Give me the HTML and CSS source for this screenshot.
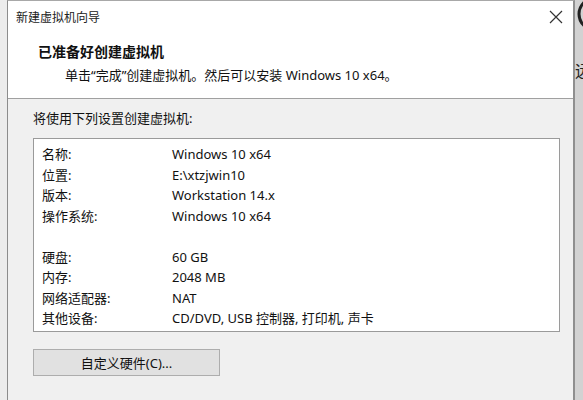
FILE: index.html
```html
<!DOCTYPE html>
<html lang="zh-CN">
<head>
  <meta charset="UTF-8" />
  <title>新建虚拟机向导</title>
  <link rel="stylesheet" href="styles.css">
</head>
<body>
  <div class="screen">
    <div class="edge-left"></div>

    <div class="dialog">
      <header class="top">
        <div class="titlebar">
          <span class="title">新建虚拟机向导</span>
          <svg class="close" width="14" height="14" viewBox="0 0 14 14">
            <path d="M1 1 L13 13 M13 1 L1 13" stroke="#333" stroke-width="1.2" fill="none" />
          </svg>
        </div>
        <h1>已准备好创建虚拟机</h1>
        <p class="sub">单击“完成”创建虚拟机。然后可以安装 Windows 10 x64。</p>
      </header>

      <main class="content">
        <p class="intro">将使用下列设置创建虚拟机:</p>

        <div class="summary">
          <div class="row"><span class="key">名称:</span><span>Windows 10 x64</span></div>
          <div class="row"><span class="key">位置:</span><span>E:\xtzjwin10</span></div>
          <div class="row"><span class="key">版本:</span><span>Workstation 14.x</span></div>
          <div class="row"><span class="key">操作系统:</span><span>Windows 10 x64</span></div>
          <div class="row gap"></div>
          <div class="row"><span class="key">硬盘:</span><span>60 GB</span></div>
          <div class="row"><span class="key">内存:</span><span>2048 MB</span></div>
          <div class="row"><span class="key">网络适配器:</span><span>NAT</span></div>
          <div class="row"><span class="key">其他设备:</span><span>CD/DVD, USB 控制器, 打印机, 声卡</span></div>
        </div>

        <button class="btn">自定义硬件(C)...</button>
      </main>
    </div>

    <div class="edge-right">
      <svg class="bg-icon" width="20" height="40" viewBox="0 0 20 40">
        <circle cx="20" cy="14" r="16" stroke="#222" stroke-width="3" fill="none" />
      </svg>
      <span class="bg-text">远</span>
    </div>
  </div>
</body>
</html>
```

FILE: styles.css
```css
body {
  margin: 0;
  font-family: "Noto Sans", "Noto Sans CJK SC", sans-serif;
  font-size: 13px;
  color: #111;
  background-color: #e9e9e9;
}

.screen {
  display: flex;
  height: 400px;
  overflow: hidden;
}

.edge-left {
  width: 7px;
  background-color: #ececec;
}

.dialog {
  width: 565px;
  border-left: 1px solid #8c8c8c;
  border-top: 1px solid #a8a8a8;
  border-right: 2px solid #8f8f8f;
  background-color: #f0f0f0;
  display: flex;
  flex-direction: column;
}

.top {
  background-color: #fff;
  height: 97px;
  border-bottom: 1px solid #a0a0a0;
}

.titlebar {
  display: flex;
  justify-content: space-between;
  align-items: center;
  height: 32px;
  padding: 0 10px 0 8px;
}

.title {
  font-size: 12px;
  color: #222;
}

.close {
  margin-top: -1px;
}

h1 {
  margin: 9px 0 0 30px;
  font-size: 14px;
  font-weight: bold;
  line-height: 20px;
}

.sub {
  margin: 3px 0 0 57px;
  line-height: 20px;
}

.content {
  padding: 10px 0 0 25px;
}

.intro {
  margin: 0;
  line-height: 18px;
}

.summary {
  margin-top: 11px;
  width: 517px;
  height: 187px;
  background-color: #fff;
  border: 1px solid #9a9a9a;
  padding: 5px 0 0 8px;
}

.row {
  display: flex;
  height: 20.5px;
  line-height: 20px;
}

.key {
  width: 130px;
}

.btn {
  margin-top: 17px;
  width: 187px;
  height: 27px;
  background-color: #e1e1e1;
  border: 1px solid #adadad;
  font-family: inherit;
  font-size: 13px;
  color: #111;
  padding: 0;
}

.edge-right {
  flex: 1;
  position: relative;
  background-color: #d2d2d2;
}

.bg-icon {
  position: absolute;
  left: 0;
  top: 0;
}

.bg-text {
  position: absolute;
  left: 0;
  top: 58px;
  font-size: 16px;
  color: #222;
}
```
